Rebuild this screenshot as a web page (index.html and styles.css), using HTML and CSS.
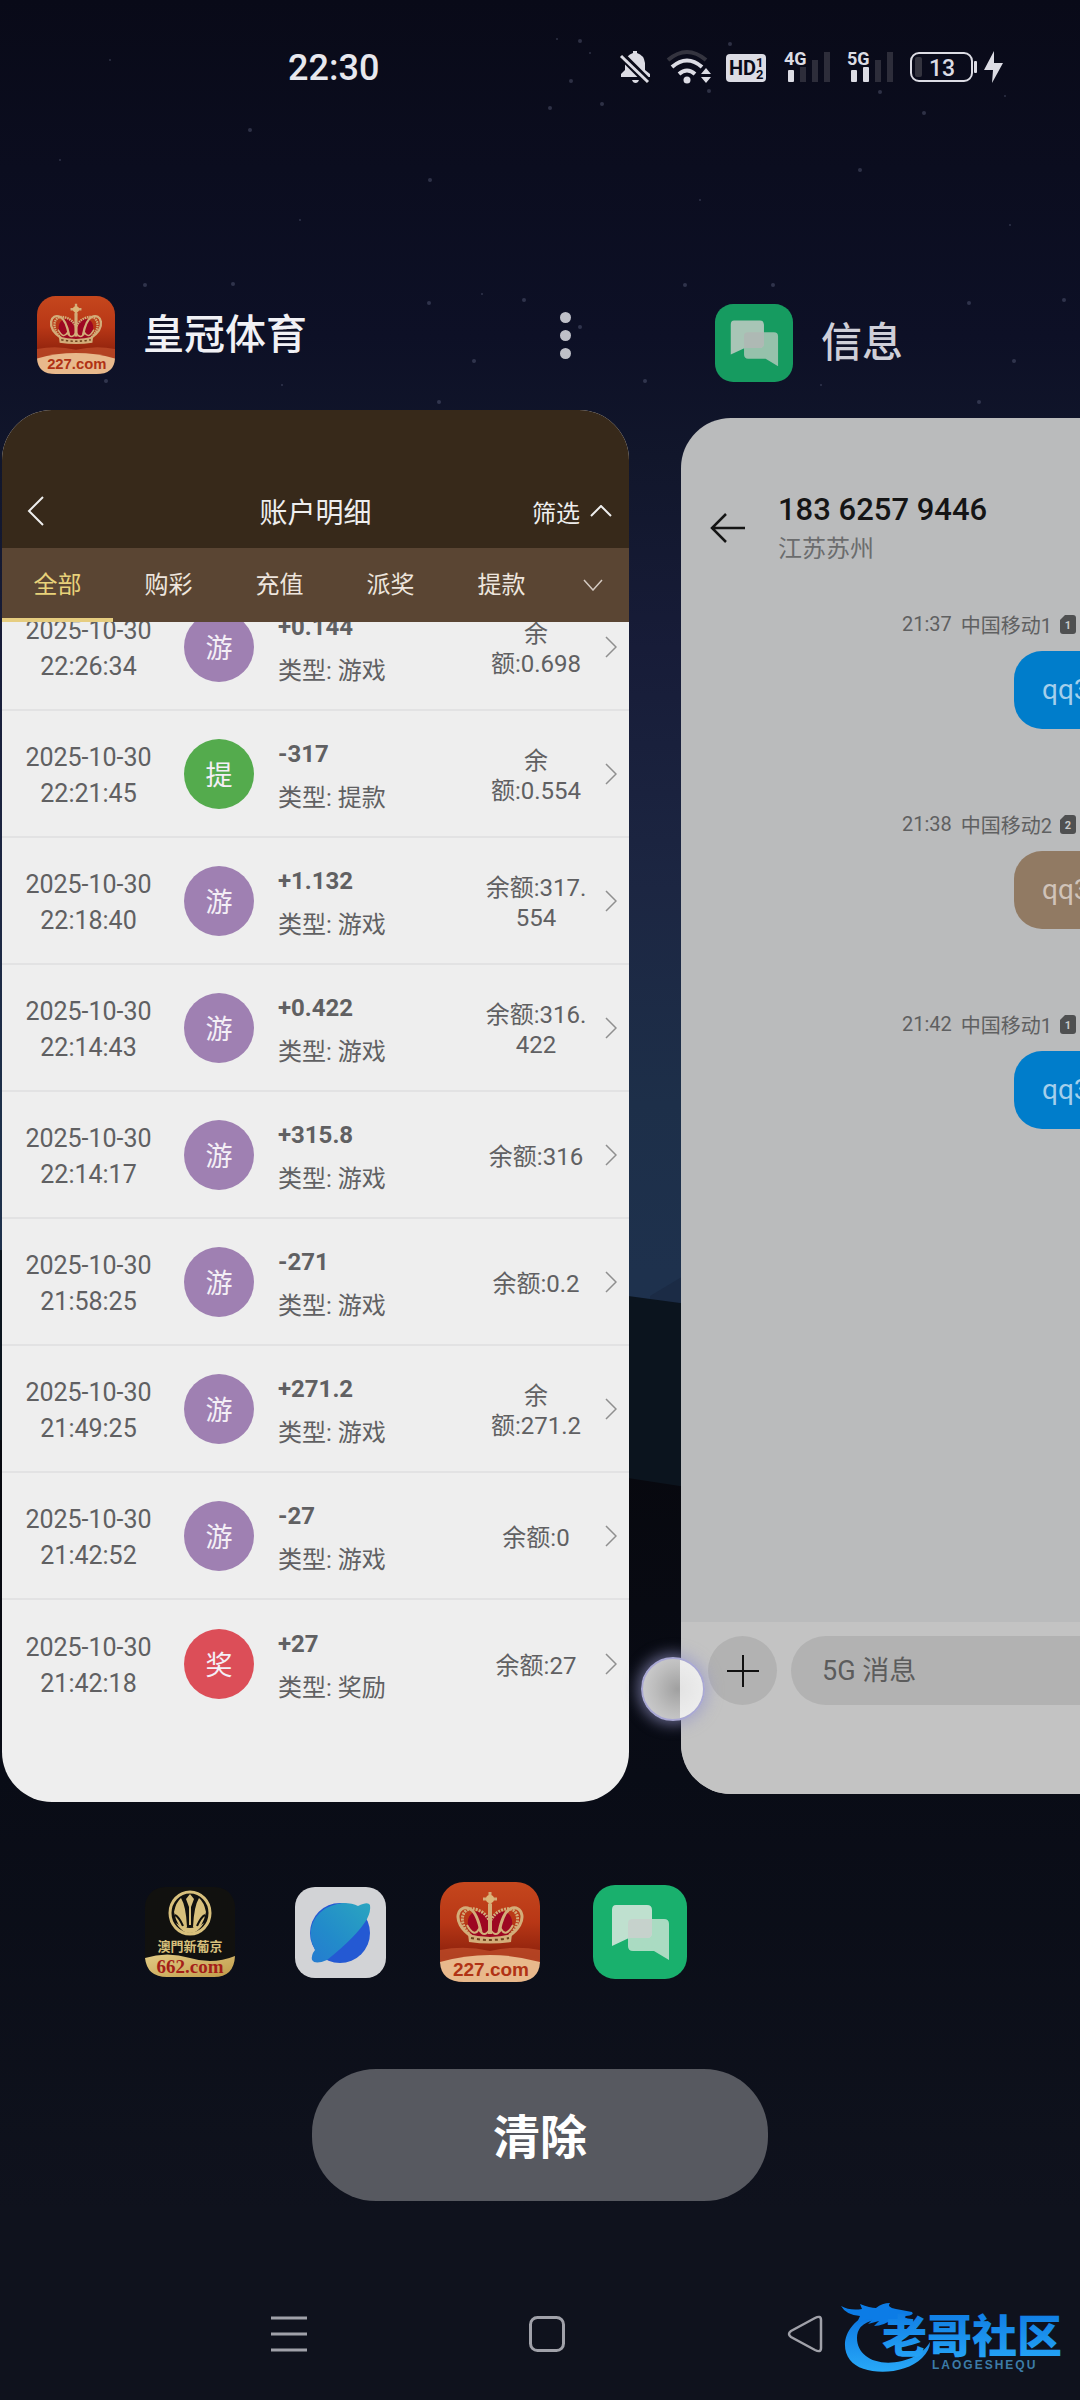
FILE: index.html
```html
<!DOCTYPE html>
<html lang="zh-CN">
<head>
<meta charset="utf-8">
<meta name="viewport" content="width=device-width, initial-scale=1">
<title>最近任务</title>
<link rel="stylesheet" href="styles.css">
</head>
<body>
<svg width="0" height="0" class="defs" aria-hidden="true">
  <defs>
    <linearGradient id="g-red" x1="0" y1="0" x2="0" y2="1"><stop offset="0" stop-color="#c5471d"/><stop offset=".4" stop-color="#b83716"/><stop offset=".75" stop-color="#8c210c"/><stop offset="1" stop-color="#a83214"/></linearGradient>
    <linearGradient id="g-gold" x1="0" y1="0" x2="1" y2="1"><stop offset="0" stop-color="#e2cc86"/><stop offset="1" stop-color="#c09a48"/></linearGradient>
    <linearGradient id="g-blue" x1="1" y1="0" x2="0" y2="1"><stop offset="0" stop-color="#2aa5c0"/><stop offset=".6" stop-color="#228bca"/><stop offset="1" stop-color="#257bd0"/></linearGradient>
    <linearGradient id="g-logo" x1="0" y1="0" x2="0" y2="1"><stop offset="0" stop-color="#0b74e0"/><stop offset="1" stop-color="#28a9f8"/></linearGradient>
    <linearGradient id="g-ground" x1="0" y1="0" x2="0" y2="1"><stop offset="0" stop-color="#07080e"/><stop offset=".35" stop-color="#090c16"/><stop offset=".8" stop-color="#0f121d"/><stop offset="1" stop-color="#0f121d"/></linearGradient>
    <symbol id="i-crown" viewBox="0 0 100 100">
      <rect width="100" height="100" rx="24" fill="url(#g-red)"/>
      <path d="M0 68Q25 63 50 69Q75 63 100 68V80H0z" fill="#c2502c" opacity=".7"/>
      <path d="M0 80Q50 66 100 80Q99 100 76 100H24Q1 100 0 80z" fill="#e8b98c"/>
      <path d="M30 50C24 37 31 27 41 30L50 34L59 30C69 27 76 37 70 50L67 56H33z" fill="#9d0722"/>
      <g fill="none" stroke="#d3ad79" stroke-width="3">
        <path d="M31 54C10 40 18 21 30 27C36 30 39 40 41 50M69 54C90 40 82 21 70 27C64 30 61 40 59 50"/>
        <path d="M31 54C16 40 22 22 38 28Q46 31 50 40Q54 31 62 28C78 22 84 40 69 54" stroke-dasharray="2 1"/>
        <path d="M50 22V52" stroke-width="4"/>
        <path d="M43 17H57M50 10V25"/>
        <path d="M27 43Q34 56 39 47Q44 57 50 47Q56 57 61 47Q66 56 73 43" stroke-width="2"/>
      </g>
      <path d="M28 52Q50 58 72 52L71 60Q50 63 29 60z" fill="#d3ad79"/>
      <path d="M31 56Q50 60 69 56" fill="none" stroke="#6d421c" stroke-dasharray="3 3" stroke-width="2"/>
      <circle cx="50" cy="17" r="4" fill="#dcb679"/>
      <text x="51" y="94" text-anchor="middle" class="t-227">227.com</text>
    </symbol>
    <symbol id="i-chat" viewBox="0 0 94 94">
      <rect width="94" height="94" rx="22" fill="#19b06d"/>
      <path d="M23 20H54Q59 20 59 25V48Q59 53 54 53H36L19 61V25Q19 20 23 20z" fill="#cde4d8" opacity=".92"/>
      <path d="M40 34H71Q76 34 76 39V75L61 66H40Q35 66 35 61V39Q35 34 40 34z" fill="#c2e2d1" opacity=".86"/>
      <path d="M35 38Q35 34 40 34H59V48Q59 53 54 53H35z" fill="#c6d2cc"/>
    </symbol>
    <symbol id="i-right" viewBox="0 0 12 22"><path d="M1 1L11 11L1 21" fill="none" stroke="#8f8f8f" stroke-width="1.500"/></symbol>
    <symbol id="i-sim" viewBox="0 0 16 19"><path d="M5 0H13Q16 0 16 3V16Q16 19 13 19H3Q0 19 0 16V5z" fill="#4f5051"/></symbol>
  </defs>
</svg>

<div class="screen">
  <svg class="wallpaper" viewBox="0 0 1080 2400" preserveAspectRatio="none" aria-hidden="true">
    <path d="M650 1296L680 1278L760 1230V1310H650z" fill="#1b2b45"/>
    <path d="M0 1250L628 1296L680 1303L760 1296L1080 1240V2400H0z" fill="#0b141e"/>
    <path d="M0 1440L628 1478L680 1486L1080 1460V2400H0z" fill="url(#g-ground)"/>
    <g fill="#8a90b0" opacity=".28">
      <circle cx="557" cy="39" r="1"/><circle cx="580" cy="41" r="2"/><circle cx="590" cy="53" r="1"/><circle cx="730" cy="44" r="2"/><circle cx="571" cy="81" r="2"/><circle cx="550" cy="108" r="2"/><circle cx="602" cy="104" r="2"/><circle cx="709" cy="91" r="2"/><circle cx="880" cy="92" r="2"/><circle cx="924" cy="113" r="2"/><circle cx="1005" cy="96" r="1"/>
      <circle cx="145" cy="285" r="2"/><circle cx="233" cy="284" r="2"/><circle cx="429" cy="303" r="2"/><circle cx="482" cy="294" r="1"/><circle cx="524" cy="300" r="2"/><circle cx="580" cy="327" r="2"/><circle cx="474" cy="361" r="2"/><circle cx="106" cy="381" r="2"/><circle cx="282" cy="385" r="1"/><circle cx="439" cy="402" r="2"/>
      <circle cx="773" cy="285" r="2"/><circle cx="685" cy="285" r="2"/><circle cx="969" cy="303" r="2"/><circle cx="1064" cy="300" r="2"/><circle cx="1014" cy="361" r="2"/><circle cx="821" cy="385" r="1"/><circle cx="979" cy="402" r="2"/><circle cx="645" cy="381" r="2"/>
      <circle cx="60" cy="160" r="1"/><circle cx="250" cy="130" r="2"/><circle cx="300" cy="220" r="1"/><circle cx="430" cy="180" r="2"/><circle cx="700" cy="200" r="1"/><circle cx="860" cy="170" r="2"/><circle cx="1010" cy="225" r="1"/><circle cx="110" cy="60" r="1"/>
    </g>
  </svg>

  <header class="status">
    <time class="clock">22:30</time>
    <svg width="388" height="36" viewBox="0 0 388 36" class="status-icons" role="img" aria-label="状态图标">
      <g fill="#dcdce4">
        <path d="M3 27V24L7 20V13Q8 5 15 3V1H19V3Q26 5 27 13V20L32 24V27z"/>
        <path d="M14 30H21Q20 33 17.500 33Q15 33 14 30z"/>
        <path d="M2 4L31 33" stroke="#0a0b19" stroke-width="8"/>
        <path d="M3 6L30 32" stroke="#dcdce4" stroke-width="3"/>
        <circle cx="69" cy="30" r="3.500"/>
      </g>
      <g fill="none" stroke="#dcdce4" stroke-width="4">
        <path d="M61 24Q69 17 77 24M54 17Q69 4 84 17"/>
        <path d="M50 10Q69 -6 88 10" stroke="#34343f"/>
      </g>
      <path d="M83 24L88 18L93 24zM83 27L88 33L93 27z" fill="#dcdce4"/>
      <rect x="108" y="4" width="40" height="28" rx="4" fill="#dcdce4"/>
      <text x="111" y="25" class="t-hd">HD</text><text x="138" y="17" class="t-sub">1</text><text x="138" y="29" class="t-sub">2</text>
      <g class="bar-off"><rect x="182" y="17" width="6" height="15"/><rect x="194" y="10" width="6" height="22"/><rect x="206" y="2" width="6" height="30"/><rect x="257" y="10" width="6" height="22"/><rect x="269" y="2" width="6" height="30"/></g>
      <g fill="#dcdce4"><rect x="170" y="20" width="6" height="12" rx="1"/><rect x="233" y="20" width="6" height="12" rx="1"/><rect x="245" y="17" width="6" height="15" rx="1"/></g>
      <text x="166" y="15" class="t-net">4G</text><text x="229" y="15" class="t-net">5G</text>
      <rect x="293" y="3" width="61" height="28" rx="8" fill="none" stroke="#dcdce4" stroke-width="2"/>
      <rect x="297" y="7" width="7" height="20" rx="2" fill="#34343f"/>
      <rect x="356" y="11" width="3" height="12" rx="1" fill="#dcdce4"/>
      <text x="324" y="26" text-anchor="middle" class="t-bat">13</text>
      <path d="M376 1L366 20H375L374 33L385 13H376z" fill="#dcdce4"/>
    </svg>
  </header>

  <main class="tasks">
    <section class="task">
      <div class="task-head">
        <svg class="task-icon" aria-hidden="true"><use href="#i-crown"/></svg>
        <h2>皇冠体育</h2>
        <button class="more" aria-label="更多"><i></i><i></i><i></i></button>
      </div>
      <article class="card account">
        <div class="acc-bar">
          <button class="plain back" aria-label="返回"><svg width="18" height="30" viewBox="0 0 18 30"><path d="M16 1L2 15L16 29" fill="none" stroke="#eee" stroke-width="2"/></svg></button>
          <h3>账户明细</h3>
          <button class="plain filter">筛选<svg width="22" height="12" viewBox="0 0 22 12"><path d="M1 11L11 1L21 11" fill="none" stroke="#eee" stroke-width="2"/></svg></button>
        </div>
        <nav class="tabs">
          <button class="plain on">全部</button><button class="plain">购彩</button><button class="plain">充值</button><button class="plain">派奖</button><button class="plain">提款</button>
          <button class="plain arrow" aria-label="展开"><svg width="20" height="12" viewBox="0 0 20 12"><path d="M1 1L10 11L19 1" fill="none" stroke="#d4cac2" stroke-width="1.500"/></svg></button>
        </nav>
        <div class="list">
          <ul>
            <li><p class="when">2025-10-30<br>22:26:34</p><span class="badge">游</span><p class="what"><b>+0.144</b>类型: 游戏</p><p class="bal">余<br>额:0.698</p><svg class="go"><use href="#i-right"/></svg></li>
            <li><p class="when">2025-10-30<br>22:21:45</p><span class="badge green">提</span><p class="what"><b>-317</b>类型: 提款</p><p class="bal">余<br>额:0.554</p><svg class="go"><use href="#i-right"/></svg></li>
            <li><p class="when">2025-10-30<br>22:18:40</p><span class="badge">游</span><p class="what"><b>+1.132</b>类型: 游戏</p><p class="bal">余额:317.<br>554</p><svg class="go"><use href="#i-right"/></svg></li>
            <li><p class="when">2025-10-30<br>22:14:43</p><span class="badge">游</span><p class="what"><b>+0.422</b>类型: 游戏</p><p class="bal">余额:316.<br>422</p><svg class="go"><use href="#i-right"/></svg></li>
            <li><p class="when">2025-10-30<br>22:14:17</p><span class="badge">游</span><p class="what"><b>+315.8</b>类型: 游戏</p><p class="bal">余额:316</p><svg class="go"><use href="#i-right"/></svg></li>
            <li><p class="when">2025-10-30<br>21:58:25</p><span class="badge">游</span><p class="what"><b>-271</b>类型: 游戏</p><p class="bal">余额:0.2</p><svg class="go"><use href="#i-right"/></svg></li>
            <li><p class="when">2025-10-30<br>21:49:25</p><span class="badge">游</span><p class="what"><b>+271.2</b>类型: 游戏</p><p class="bal">余<br>额:271.2</p><svg class="go"><use href="#i-right"/></svg></li>
            <li><p class="when">2025-10-30<br>21:42:52</p><span class="badge">游</span><p class="what"><b>-27</b>类型: 游戏</p><p class="bal">余额:0</p><svg class="go"><use href="#i-right"/></svg></li>
            <li><p class="when">2025-10-30<br>21:42:18</p><span class="badge red">奖</span><p class="what"><b>+27</b>类型: 奖励</p><p class="bal">余额:27</p><svg class="go"><use href="#i-right"/></svg></li>
          </ul>
        </div>
      </article>
    </section>

    <section class="task side">
      <div class="task-head">
        <svg class="task-icon dim" aria-hidden="true"><use href="#i-chat"/></svg>
        <h2>信息</h2>
      </div>
      <article class="card sms">
        <div class="sms-bar">
          <button class="plain" aria-label="返回"><svg width="36" height="30" viewBox="0 0 36 30"><path d="M16 1L2 15L16 29M2 15H35" fill="none" stroke="#151515" stroke-width="2.500"/></svg></button>
          <div><h3>183 6257 9446</h3><p>江苏苏州</p></div>
        </div>
        <div class="thread">
          <div class="msg"><p class="meta">21:37 <span>中国移动1</span><svg width="16" height="19"><use href="#i-sim"/><text x="8" y="14" text-anchor="middle" class="t-sim">1</text></svg></p><p class="bubble">qq3</p></div>
          <div class="msg"><p class="meta">21:38 <span>中国移动2</span><svg width="16" height="19"><use href="#i-sim"/><text x="8" y="14" text-anchor="middle" class="t-sim">2</text></svg></p><p class="bubble tan">qq3</p></div>
          <div class="msg"><p class="meta">21:42 <span>中国移动1</span><svg width="16" height="19"><use href="#i-sim"/><text x="8" y="14" text-anchor="middle" class="t-sim">1</text></svg></p><p class="bubble">qq3</p></div>
        </div>
        <div class="composer">
          <button class="plus" aria-label="添加"><svg width="32" height="32" viewBox="0 0 32 32"><path d="M16 0V32M0 16H32" stroke="#111" stroke-width="2"/></svg></button>
          <input type="text" placeholder="5G 消息" aria-label="5G 消息">
        </div>
      </article>
    </section>
    <i class="touch"></i>
  </main>

  <nav class="dock" aria-label="应用">
    <svg width="100" height="102" viewBox="0 0 100 102" role="img" aria-label="澳門新葡京">
      <rect x="5" y="6" width="90" height="90" rx="20" fill="#11110f"/>
      <path d="M5 77Q27 70 50 77T95 75Q94 96 74 96H27Q7 96 5 77z" fill="url(#g-gold)"/>
      <ellipse cx="50" cy="32" rx="20" ry="21" fill="none" stroke="#d8c07c" stroke-width="3"/>
      <path d="M34 31Q36 21 41 17Q46 25 47 46L45 49Q37 46 34 31zM66 31Q64 21 59 17Q54 25 53 46L55 49Q63 46 66 31z" fill="#d8c07c"/>
      <path d="M50 13L54 18L51 26V44H49V26L46 18z" fill="#d8c07c"/>
      <path d="M35 34Q39 36 43 45M65 34Q61 36 57 45" stroke="#11110f" stroke-width="2" fill="none"/>
      <path d="M36 42Q50 52 64 42Q58 52 50 52Q42 52 36 42z" fill="#d8c07c"/>
      <text x="50" y="70" text-anchor="middle" class="t-pj">澳門新葡京</text>
      <text x="50" y="92" text-anchor="middle" class="t-662">662.com</text>
    </svg>
    <svg width="100" height="102" viewBox="0 0 100 102" role="img" aria-label="浏览器">
      <rect x="5" y="6" width="91" height="91" rx="20" fill="#d2d3d6"/>
      <circle cx="50" cy="52" r="30" fill="#2459d3"/>
      <path d="M53 22Q63 22 68 25Q78 20 80 24Q81 30 77 38Q67 55 37 79Q25 84 22 79Q21 74 25 69Q18 55 22 44Q29 25 53 22z" fill="url(#g-blue)"/>
    </svg>
    <svg width="100" height="102" role="img" aria-label="皇冠体育"><use href="#i-crown"/></svg>
    <svg width="94" height="94" class="chat" role="img" aria-label="信息"><use href="#i-chat"/></svg>
  </nav>

  <button class="clear">清除</button>

  <footer class="navbar">
    <button class="plain" aria-label="最近任务"><svg width="36" height="38" viewBox="0 0 36 38"><path d="M0 3H36M0 19H36M0 35H36" stroke="#a0a1a9" stroke-width="3"/></svg></button>
    <button class="plain" aria-label="主屏幕"><svg width="36" height="38" viewBox="0 0 36 38"><rect x="1.500" y="2.500" width="33" height="33" rx="7" fill="none" stroke="#a0a1a9" stroke-width="3"/></svg></button>
    <button class="plain" aria-label="返回"><svg width="36" height="38" viewBox="0 0 36 38"><path d="M4 16L28 3Q34 0 34 5V33Q34 38 28 35L4 22Q0 19 4 16z" fill="none" stroke="#a0a1a9" stroke-width="2.500"/></svg></button>
  </footer>
  <svg class="mark" width="224" height="76" viewBox="0 0 224 76" role="img" aria-label="老哥社区">
    <path d="M34 12C8 20 -2 44 10 60C22 76 64 76 82 58Q90 50 90 42Q82 56 62 61C36 67 17 56 17 38Q17 24 34 20z" fill="url(#g-logo)"/>
    <path d="M1 6Q10 11 22 9L20 4Q30 8 36 8Q42 3 50 3Q46 7 56 9L72 12Q75 15 66 16Q62 18 72 19V23Q60 24 52 19Q44 26 34 26L39 21L28 24L33 19Q20 20 16 25L20 16Q6 15 1 6z" fill="#0c7ce6"/>
    <text x="42" y="53" class="t-mark">老哥社区</text>
    <text x="92" y="69" class="t-mark2">LAOGESHEQU</text>
  </svg>
</div>
</body>
</html>
```
FILE: styles.css
```css
* { box-sizing: border-box; margin: 0; padding: 0; }
body {
  font-family: Roboto, "Noto Sans CJK SC", sans-serif;
  background: #0f121d;
}
.defs { position: absolute; }
svg { display: block; flex: none; }
button { font: inherit; color: inherit; border: 0; background: none; }
h2, h3 { font-weight: 500; }

.screen {
  position: relative;
  min-height: 100vh;
  overflow: hidden;
  display: flex;
  flex-direction: column;
  background: linear-gradient(#090a18 0, #0d1026 14%, #11162b 19%, #171c38 27%, #1c2642 37%, #1d2f49 46%, #1e314d 53%, #1e3350 100%);
}
.wallpaper { position: absolute; inset: 0; width: 100%; height: 100%; }
.status, .tasks, .dock, .clear, .navbar { position: relative; }

/* status bar */
.status {
  display: flex;
  align-items: center;
  justify-content: space-between;
  height: 136px;
  padding: 0 74px 0 288px;
}
.status-icons { overflow: visible; }
.clock { font-size: 36px; font-weight: 500; color: #e8e8ee; }
.bar-off { fill: #2d2d3a; }
.t-hd { font: 700 20px "Roboto"; fill: #0a0b19; }
.t-sub { font: 700 13px "Roboto"; fill: #0a0b19; }
.t-net { font: 700 18px "Roboto"; fill: #dcdce4; }
.t-bat { font: 500 23px "Roboto"; fill: #dcdce4; }

/* task cards */
.tasks {
  display: flex;
  align-items: flex-start;
  gap: 52px;
  padding: 150px 0 0 2px;
}
.task { flex: none; width: 58%; min-width: 627px; }
.side { padding-top: 8px; }
.task-head {
  display: flex;
  align-items: center;
  height: 124px;
  padding: 0 58px 26px 35px;
  color: #f1f1f5;
}
.task-head h2 { flex: 1; padding-left: 28px; font-size: 41px; line-height: 60px; }
.task-icon { width: 78px; height: 78px; }
.side .task-head { padding-left: 34px; }
.dim { filter: brightness(.88); }
.side h2 { color: #cfcfd8; }
.more { display: flex; flex-direction: column; gap: 7px; }
.more i { width: 11px; height: 11px; border-radius: 50%; background: #bfc0c8; }
.card { border-radius: 50px; overflow: hidden; display: flex; flex-direction: column; }

/* account details */
.account { background: #eee; padding-bottom: 75px; }
.acc-bar {
  display: grid;
  grid-template-columns: 1fr auto 1fr;
  align-items: center;
  height: 138px;
  padding: 64px 17px 0;
  background: #37291a;
  color: #eee;
}
.back { padding-left: 8px; justify-self: start; }
.acc-bar h3 { font-size: 28px; font-weight: 400; }
.filter { display: flex; align-items: center; justify-content: flex-end; gap: 10px; font-size: 24px; }
.tabs { display: flex; height: 74px; background: #5a4533; color: #eee5de; }
.tabs button { flex: 0 0 111px; padding-bottom: 5px; font-size: 24px; }
.tabs .on { color: #e8d27a; border-bottom: 4px solid #e6cd80; padding-bottom: 1px; }
.tabs .arrow { flex: 1; display: grid; place-items: center; padding-bottom: 0; }
.list { overflow: hidden; }
.list ul { margin-top: -38px; list-style: none; }
.list li {
  display: flex;
  align-items: center;
  height: 127px;
  padding: 0 12px 0 11px;
  border-bottom: 2px solid #e2e2e3;
  color: #606062;
  font-size: 24px;
}
.list li:last-child { border-bottom: 0; }
.list p { padding-top: 4px; }
.when { width: 151px; text-align: center; font-size: 25px; line-height: 36px; }
.badge {
  display: grid;
  place-items: center;
  width: 70px;
  height: 70px;
  margin: 0 24px 0 20px;
  border-radius: 50%;
  background: #9f80b2;
  color: #f4eff6;
  font-size: 27px;
}
.green { background: #54ab4d; }
.red { background: #dc4e58; }
.what { flex: 1; line-height: 44px; }
.what b { display: block; font-weight: 700; }
.bal { width: 120px; text-align: center; line-height: 30px; }
.go { width: 12px; height: 22px; margin-left: 9px; }

/* messages */
.sms { background: #babbbc; }
.sms-bar {
  display: flex;
  align-items: center;
  gap: 32px;
  padding: 71px 29px 0;
  color: #151515;
}
.sms-bar h3 { font-size: 31px; line-height: 42px; }
.sms-bar p { font-size: 24px; line-height: 36px; color: #6b6c6d; }
.thread { padding: 41px 0 414px 221px; }
.msg { height: 200px; }
.meta {
  display: flex;
  align-items: center;
  height: 32px;
  color: #5f6061;
  font-size: 20px;
  white-space: nowrap;
}
.meta span { margin: 0 8px 0 9px; }
.t-sim { font: 700 11px "Roboto"; fill: #c8c9ca; }
.bubble {
  width: max-content;
  height: 78px;
  margin: 11px 0 0 112px;
  padding: 0 28px;
  border-radius: 28px;
  background: #007dcb;
  color: #a4cfeb;
  font-size: 28px;
  line-height: 78px;
}
.tan { background: #917a63; color: #d0c3b9; }
.composer {
  display: flex;
  gap: 14px;
  height: 172px;
  padding: 14px 27px;
  background: #c3c3c3;
}
.plus { display: grid; place-items: center; flex: none; width: 69px; height: 69px; border-radius: 50%; background: #b2b2b2; }
.composer input {
  flex: 1;
  min-width: 0;
  height: 69px;
  padding: 0 31px;
  border: 0;
  border-radius: 35px;
  background: #b2b2b2;
  font: 27px Roboto, "Noto Sans CJK SC", sans-serif;
}
.composer input::placeholder { color: #5c5c5c; }
.touch {
  position: absolute;
  left: 641px;
  bottom: 81px;
  width: 64px;
  height: 64px;
  border: 2px solid #a9a8d4;
  border-radius: 50%;
  background: radial-gradient(circle at 58% 50%, #a0a0a0, #bdbdbd 50%, #d4d4d6);
  box-shadow: 0 0 14px 4px rgba(150, 150, 200, .6);
}
.touch::after {
  content: "";
  position: absolute;
  inset: 0;
  border-radius: 50%;
  background: linear-gradient(90deg, transparent 62%, rgba(255, 255, 255, .7) 62%);
}

/* dock and system navigation */
.dock { display: flex; align-items: center; gap: 50px; padding: 79px 0 0 140px; }
.chat { margin-left: 3px; }
.t-227 { font: 700 19px "Liberation Sans"; fill: #b03214; }
.t-pj { font: 700 13px "Noto Sans CJK TC"; fill: #d8c07c; }
.t-662 { font: 700 19px "Liberation Serif"; fill: #a51f18; }
.clear {
  align-self: center;
  width: 456px;
  height: 132px;
  margin-top: 86px;
  padding-bottom: 3px;
  border-radius: 64px;
  background: #575960;
  color: #fff;
  font-size: 47px;
  font-weight: 700;
}
.navbar { display: flex; gap: 222px; margin-top: 114px; padding-left: 271px; }
.mark { position: absolute; right: 16px; bottom: 24px; }
.t-mark { font: 900 45px "Noto Sans CJK SC"; fill: url(#g-logo); }
.t-mark2 { font: 700 12px "Liberation Sans"; letter-spacing: 2px; fill: #3c7ca8; }
```
